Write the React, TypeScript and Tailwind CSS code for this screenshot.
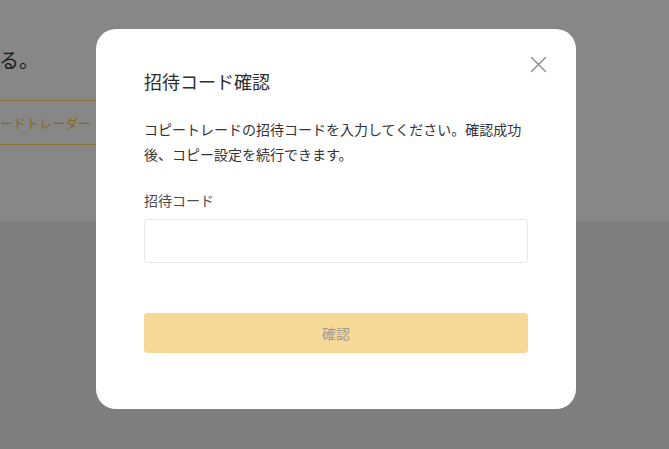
const font = "font-['Noto_Sans_CJK_JP','Noto_Sans',sans-serif]";

const App = () => {
  return (
    <div className={`relative w-[669px] h-[449px] overflow-hidden ${font}`}>
      {/* page behind the dimmed overlay */}
      <div className="h-[221px] bg-[#878787] pt-[44px]">
        <div className="w-[96px] overflow-hidden flex justify-end">
          <p className="whitespace-nowrap text-[20px] leading-[32px] text-[#1c1c1c] pr-[57px]">
            コピートレードを開始する。
          </p>
        </div>
        <div className="mt-[24px] w-[96px] overflow-hidden flex">
          <div className="-ml-[13px] h-[45px] border-y border-[#8c7132] flex items-center whitespace-nowrap text-[13px] text-[#86691f] pr-6">
            リードトレーダー・申請
          </div>
        </div>
      </div>
      <div className="h-[228px] bg-[#7f7f7f]"></div>

      {/* modal */}
      <div className="absolute left-[96px] top-[29px] w-[480px] h-[380px] bg-white rounded-[20px] px-12 pt-[38px]">
        <button className="absolute right-[29px] top-[27px] text-[#8a8a8a]">
          <svg width="17" height="17" viewBox="0 0 17 17" fill="none" stroke="currentColor" strokeWidth="1.4" strokeLinecap="round">
            <path d="M1.5 1.5l14 14M15.5 1.5l-14 14" />
          </svg>
        </button>
        <h2 className="text-[18px] leading-[28px] font-normal text-[#2e2e2e]">招待コード確認</h2>
        <p className="mt-[22px] text-[14px] leading-[25px] text-[#333]">
          コピートレードの招待コードを入力してください。確認成功後、コピー設定を続行できます。
        </p>
        <p className="mt-[22px] text-[14px] leading-[22px] text-[#4d4d4d]">招待コード</p>
        <input
          type="text"
          className="mt-2 block w-full h-[44px] rounded border border-[#e8e8e8] px-3 text-[14px] outline-none"
        />
        <button className="mt-[50px] w-full h-[40px] rounded bg-[#f6d997] text-[14px] text-[#a09c92]">
          確認
        </button>
      </div>
    </div>
  );
};

export default App;
